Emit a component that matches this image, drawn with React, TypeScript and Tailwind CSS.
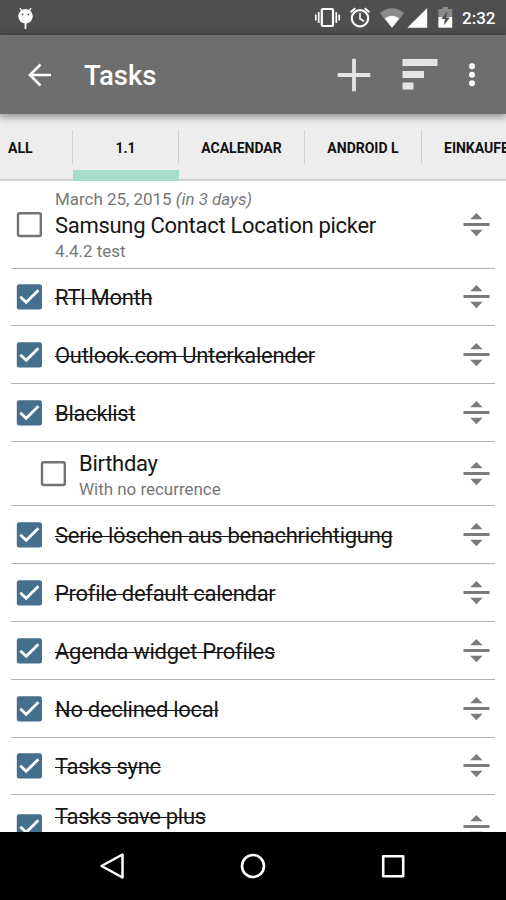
import clsx from 'clsx';

interface Task {
  title: string;
  done: boolean;
  height: string;
  date?: string;
  due?: string;
  note?: string;
  sub?: boolean;
}

const tabs = [
  { label: 'ALL', className: 'w-[72px] pl-2' },
  { label: '1.1', className: 'w-[106px] justify-center border-l', active: true },
  { label: 'ACALENDAR', className: 'w-[126px] justify-center border-l' },
  { label: 'ANDROID L', className: 'w-[117px] justify-center border-l' },
  { label: 'EINKAUFEN', className: 'w-[126px] pl-[22px] border-l' },
];

const tasks: Task[] = [
  {
    title: 'Samsung Contact Location picker',
    done: false,
    height: 'h-[88px]',
    date: 'March 25, 2015',
    due: '(in 3 days)',
    note: '4.4.2 test',
  },
  { title: 'RTl Month', done: true, height: 'h-[57px]' },
  { title: 'Outlook.com Unterkalender', done: true, height: 'h-[58px]' },
  { title: 'Blacklist', done: true, height: 'h-[58px]' },
  { title: 'Birthday', done: false, height: 'h-[64px]', note: 'With no recurrence', sub: true },
  { title: 'Serie löschen aus benachrichtigung', done: true, height: 'h-[58px]' },
  { title: 'Profile default calendar', done: true, height: 'h-[58px]' },
  { title: 'Agenda widget Profiles', done: true, height: 'h-[58px]' },
  { title: 'No declined local', done: true, height: 'h-[58px]' },
  { title: 'Tasks sync', done: true, height: 'h-[57px]' },
  { title: 'Tasks save plus', done: true, height: 'h-[64px] *:nth-2:pb-[22px]' },
];

function StatusBar() {
  return (
    <div className="flex h-[35px] shrink-0 items-center justify-between bg-[#4f4f4f] text-white">
      <svg className="ml-[17px] h-[22px] w-[17px]" viewBox="0 0 17 22" fill="none">
        <path d="M3 1.2 5 4M14 1.2 12 4" stroke="#fff" strokeWidth="1.3" />
        <circle cx="8.5" cy="9.3" r="7.2" fill="#fff" />
        <path d="M8.5 16v6" stroke="#fff" strokeWidth="1.8" />
        <circle cx="5.5" cy="7.5" r="0.9" fill="#4f4f4f" />
        <circle cx="11.5" cy="7.5" r="0.9" fill="#4f4f4f" />
      </svg>
      <div className="flex h-full items-center">
        <svg className="h-[35px] w-[140px]" viewBox="314 0 140 35" fill="none">
          {/* vibrate */}
          <rect x="321.8" y="9" width="11.2" height="17" rx="1" stroke="#fff" strokeWidth="2.2" />
          <path d="M315.8 14.5v6M318.7 12v11M336.3 12v11M339.2 14.5v6" stroke="#fff" strokeWidth="1.7" />
          {/* alarm */}
          <circle cx="360" cy="18.3" r="8.2" stroke="#fff" strokeWidth="2.1" />
          <path d="M360 13v5.8l4 2.5" stroke="#fff" strokeWidth="1.6" />
          <path d="M350.5 12.3l4.8-4M369.5 12.3l-4.8-4" stroke="#fff" strokeWidth="2" />
          {/* wifi */}
          <path d="M379.8 13Q392 3.5 404.2 13L392 27.7Z" fill="#8a8a8a" />
          <path d="M384.6 18.5Q392 13 399.4 18.5L392 27.7Z" fill="#fff" />
          {/* signal */}
          <path d="M407.3 27.7 427.2 8v19.7Z" fill="#fff" />
          {/* battery */}
          <path d="M442.5 7h5.5v2h4.2v9h-13.8V9h4.1Z" fill="#8a8a8a" />
          <path d="M438.4 17h13.8v10.7h-13.8Z" fill="#fff" />
          <path d="M447.5 11.5 441.3 19h3.6l-1 6.2 6-7.6h-3.6Z" fill="#4f4f4f" />
        </svg>
        <span className="w-[52px] pt-[2px] pl-2 text-[17px] leading-none font-medium">2:32</span>
      </div>
    </div>
  );
}

function AppBar() {
  return (
    <header className="relative z-10 flex h-[79px] shrink-0 items-center bg-[#6e6e6e] text-white shadow-[0_2px_8px_1px_rgba(0,0,0,0.4)]">
      <svg className="ml-[27px] h-6 w-6" viewBox="0 0 24 24" fill="none" stroke="#fff" strokeWidth="2.6">
        <path d="M24 12H3M13.5 1.5 3 12l10.5 10.5" />
      </svg>
      <h1 className="ml-[33px] flex-1 pt-[3px] text-[27.5px] leading-none font-medium">Tasks</h1>
      <svg className="h-[34px] w-[34px]" viewBox="0 0 34 34" stroke="#e4e4e4" strokeWidth="3.8">
        <path d="M17 .7v32.6M.7 17h32.6" />
      </svg>
      <svg className="ml-[31px] h-[31px] w-[36px]" viewBox="0 0 36 31" fill="#e4e4e4">
        <path d="M.5 0H35.5v7H.5ZM.5 12H22v7H.5ZM.5 23.5H11.5v7H.5Z" />
      </svg>
      <svg className="mr-[30px] ml-[30px] h-6 w-[8px]" viewBox="0 0 8 24" fill="#fff">
        <circle cx="4" cy="3.3" r="3" />
        <circle cx="4" cy="11.8" r="3" />
        <circle cx="4" cy="20.3" r="3" />
      </svg>
    </header>
  );
}

function TabBar() {
  return (
    <nav className="flex h-[67px] w-full shrink-0 overflow-hidden bg-[#ededed] shadow-[inset_0_-2px_0_#d0d0d0]">
      {tabs.map((tab) => (
        <div key={tab.label} className="relative flex h-full shrink-0 items-center pb-[2px]">
          <div
            className={clsx(
              'flex h-[34px] items-center border-[#cfcfcf] pt-[3px] text-[14px] font-bold whitespace-nowrap text-[#111]',
              tab.className,
            )}
          >
            {tab.label}
          </div>
          {tab.active && <div className="absolute bottom-0 left-[1px] h-[11px] w-full bg-[#a5dfca]" />}
        </div>
      ))}
    </nav>
  );
}

function Checkbox({ checked }: { checked: boolean }) {
  return (
    <svg className="h-[26px] w-[26px] shrink-0" viewBox="0 0 26 26" fill="none">
      {checked ? (
        <>
          <rect x="0.8" y="0.3" width="25.2" height="25.2" rx="2.5" fill="#44708e" />
          <path d="M4.3 12.8 10.2 18.3 22.4 6.3" stroke="#fff" strokeWidth="2.8" />
        </>
      ) : (
        <rect x="2" y="1.2" width="22.8" height="22.8" rx="1.5" stroke="#737373" strokeWidth="2.4" />
      )}
    </svg>
  );
}

function DragHandle() {
  return (
    <svg className="mr-[5px] h-6 w-[27px] shrink-0" viewBox="0 0 27 24" fill="#7b7b7b">
      <path d="M13.4 0 19.6 6.3H7.2ZM.5 9.9h26v3H.5ZM7.2 16.8h12.4L13.4 23.2Z" />
    </svg>
  );
}

function TaskRow({ task }: { task: Task }) {
  return (
    <li
      className={clsx(
        'mx-[11px] flex shrink-0 items-center border-b border-[#b3b3b3]',
        task.height,
        task.sub ? 'pl-[29px]' : 'pl-[5px]',
      )}
    >
      <Checkbox checked={task.done} />
      <div className="ml-[13px] flex-1 whitespace-nowrap">
        {task.date && (
          <p className="text-[17px] leading-[22px] tracking-[-0.03px] text-[#777]">
            {task.date} <em>{task.due}</em>
          </p>
        )}
        <p
          className={clsx(
            'pt-[2px] text-[22px] leading-[28px] tracking-[-0.29px] text-[#151515]',
            task.done && 'line-through decoration-1',
          )}
        >
          {task.title}
        </p>
        {task.note && (
          <p className="pt-[1px] pb-[1px] text-[17px] leading-[20px] tracking-[-0.03px] text-[#777]">{task.note}</p>
        )}
      </div>
      <DragHandle />
    </li>
  );
}

function NavigationBar() {
  return (
    <footer className="flex h-[68px] shrink-0 items-center justify-center gap-[112px] bg-black">
      <svg className="h-7 w-7" viewBox="0 0 28 28" fill="none" stroke="#fff" strokeWidth="2.5" strokeLinejoin="round">
        <path d="M23.5 2.5v23L2.5 14Z" />
      </svg>
      <svg className="h-7 w-7" viewBox="0 0 28 28" fill="none" stroke="#fff" strokeWidth="2.6">
        <circle cx="14" cy="14" r="11" />
      </svg>
      <svg className="h-7 w-7" viewBox="0 0 28 28" fill="none" stroke="#fff" strokeWidth="2.6" strokeLinejoin="round">
        <rect x="4.2" y="4.2" width="20" height="20" />
      </svg>
    </footer>
  );
}

export default function App() {
  return (
    <div className="flex h-[900px] w-[506px] flex-col overflow-hidden bg-white font-['Roboto',sans-serif]">
      <StatusBar />
      <AppBar />
      <TabBar />
      <ul className="flex min-h-0 flex-1 flex-col overflow-hidden">
        {tasks.map((task) => (
          <TaskRow key={task.title} task={task} />
        ))}
      </ul>
      <NavigationBar />
    </div>
  );
}
